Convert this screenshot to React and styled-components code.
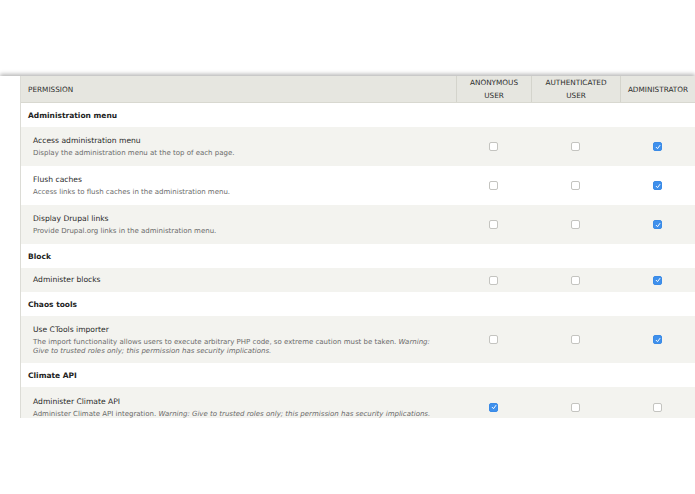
import React from "react";
import styled, { createGlobalStyle } from "styled-components";

const Global = createGlobalStyle`
  html, body {
    margin: 0;
    padding: 0;
    background: #fff;
  }
  body {
    font-family: "DejaVu Sans", "Liberation Sans", sans-serif;
    color: #333;
  }
`;

const COLS = "435px 75px 89px 1fr";

const Frame = styled.div`
  margin-top: 76px;
  height: 342px;
  overflow: hidden;
  padding-left: 20px;
  box-shadow: 0 -2px 4px rgba(0, 0, 0, 0.28);
`;

const Table = styled.div`
  border-left: 1px solid #dcdcd6;
  height: 100%;
`;

const HeadRow = styled.div`
  display: grid;
  grid-template-columns: ${COLS};
  height: 27px;
  background: #e6e6e0;
  border-bottom: 1px solid #d8d8d0;
  box-sizing: border-box;
`;

const HeadCell = styled.div`
  display: flex;
  align-items: center;
  justify-content: ${(p) => (p.$left ? "flex-start" : "center")};
  padding-left: ${(p) => (p.$left ? "7px" : "0")};
  border-left: ${(p) => (p.$divider ? "1px solid #d4d4cc" : "none")};
  font-size: 7.3px;
  line-height: 13px;
  text-transform: uppercase;
  text-align: center;
  color: #2e2e2e;
`;

const ModuleRow = styled.div`
  height: 24px;
  display: flex;
  align-items: center;
  padding-left: 7px;
  font-size: 7.5px;
  font-weight: bold;
  color: #222;
  background: #fff;
`;

const PermRow = styled.div`
  display: grid;
  grid-template-columns: ${COLS};
  min-height: ${(p) => p.$h}px;
  background: ${(p) => (p.$alt ? "#fff" : "#f3f3ef")};
`;

const PermText = styled.div`
  padding: 0 20px 0 12px;
  display: flex;
  flex-direction: column;
  justify-content: center;
`;

const PermTitle = styled.div`
  font-size: 7.6px;
  color: #2a2a2a;
  line-height: 12px;
`;

const PermDesc = styled.div`
  font-size: 7px;
  color: #6a6a6a;
  line-height: 9px;
  margin-top: 2px;

  em {
    font-style: italic;
  }
`;

const BoxCell = styled.div`
  display: flex;
  align-items: center;
  justify-content: center;
`;

const Box = styled.span`
  width: 7px;
  height: 7px;
  border-radius: 2px;
  border: 1px solid ${(p) => (p.$on ? "#3a8ae6" : "#c4c4c0")};
  background: ${(p) => (p.$on ? "#3f90ec" : "#fff")};
  display: flex;
  align-items: center;
  justify-content: center;
`;

const Check = () => (
  <svg width="6" height="6" viewBox="0 0 10 10">
    <path d="M2 5.5 L4.2 7.8 L8.2 2.4" fill="none" stroke="#fff" strokeWidth="1.6" strokeLinecap="round" strokeLinejoin="round" />
  </svg>
);

const Warn = () => (
  <em>Warning: Give to trusted roles only; this permission has security implications.</em>
);

const groups = [
  {
    name: "Administration menu",
    perms: [
      { title: "Access administration menu", desc: "Display the administration menu at the top of each page.", h: 39, v: [0, 0, 1] },
      { title: "Flush caches", desc: "Access links to flush caches in the administration menu.", h: 39, v: [0, 0, 1] },
      { title: "Display Drupal links", desc: "Provide Drupal.org links in the administration menu.", h: 39, v: [0, 0, 1] },
    ],
  },
  {
    name: "Block",
    perms: [{ title: "Administer blocks", h: 24, v: [0, 0, 1] }],
  },
  {
    name: "Chaos tools",
    perms: [
      {
        title: "Use CTools importer",
        desc: (
          <>
            The import functionality allows users to execute arbitrary PHP code, so extreme caution must be taken. <Warn />
          </>
        ),
        h: 47,
        v: [0, 0, 1],
      },
    ],
  },
  {
    name: "Climate API",
    perms: [
      {
        title: "Administer Climate API",
        desc: (
          <>
            Administer Climate API integration. <Warn />
          </>
        ),
        h: 40,
        v: [1, 0, 0],
      },
    ],
  },
];

export default function App() {
  let n = 0;
  return (
    <>
      <Global />
      <Frame>
        <Table>
          <HeadRow>
            <HeadCell $left>Permission</HeadCell>
            <HeadCell $divider>Anonymous<br />user</HeadCell>
            <HeadCell $divider>Authenticated<br />user</HeadCell>
            <HeadCell $divider>Administrator</HeadCell>
          </HeadRow>
          {groups.map((g) => (
            <React.Fragment key={g.name}>
              <ModuleRow>{g.name}</ModuleRow>
              {g.perms.map((p) => {
                const alt = n++ % 2 === 1 && g.perms.length > 1;
                return (
                  <PermRow key={p.title} $h={p.h} $alt={alt}>
                    <PermText>
                      <PermTitle>{p.title}</PermTitle>
                      {p.desc && <PermDesc>{p.desc}</PermDesc>}
                    </PermText>
                    {p.v.map((on, i) => (
                      <BoxCell key={i}>
                        <Box $on={!!on}>{on ? <Check /> : null}</Box>
                      </BoxCell>
                    ))}
                  </PermRow>
                );
              })}
            </React.Fragment>
          ))}
        </Table>
      </Frame>
    </>
  );
}
